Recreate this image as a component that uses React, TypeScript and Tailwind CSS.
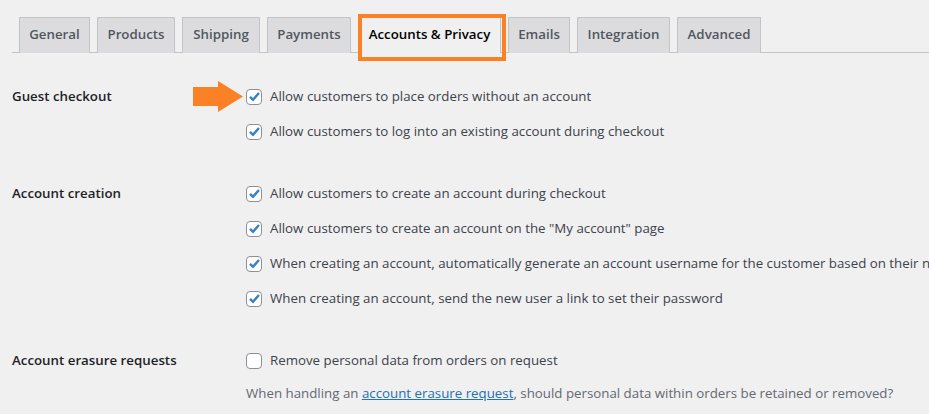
import React from "react";

const tabs = [
  { name: "General", w: "w-[71px]" },
  { name: "Products", w: "w-[78px]" },
  { name: "Shipping", w: "w-[78px]" },
  { name: "Payments", w: "w-[84px]" },
  { name: "Accounts & Privacy", w: "w-[143px]", active: true },
  { name: "Emails", w: "w-[62px]" },
  { name: "Integration", w: "w-[93px]" },
  { name: "Advanced", w: "w-[84px]" },
];

const Checkbox = ({ checked }: { checked: boolean }) => (
  <span className="w-4 h-4 shrink-0 rounded-[4px] border border-[#8c8f94] bg-white flex items-center justify-center">
    {checked && (
      <svg width="13" height="13" viewBox="0 0 13 13">
        <path d="M2 6.8 L5 9.8 L11 3" fill="none" stroke="#3582c4" strokeWidth="2.4" />
      </svg>
    )}
  </span>
);

const Option = ({ label, checked = true }: { label: string; checked?: boolean }) => (
  <div className="h-[35px] flex items-center gap-2 whitespace-nowrap">
    <Checkbox checked={checked} />
    <span className="text-[#3c434a]">{label}</span>
  </div>
);

const Section = ({ title, children }: { title: string; children: React.ReactNode }) => (
  <div className="flex">
    <div className="w-[234px] shrink-0 h-[35px] flex items-center font-semibold text-[#1d2327]">{title}</div>
    <div className="flex flex-col">{children}</div>
  </div>
);

export default function App() {
  return (
    <div
      className="w-[929px] h-[414px] overflow-hidden bg-[#f0f0f1] pl-3 text-[13.3px] relative"
      style={{ fontFamily: '"Segoe UI", "Open Sans", sans-serif' }}
    >
      {/* Tabs */}
      <div className="flex items-end pt-[17px] pl-[7px] border-b border-[#c3c4c7] h-[53px]">
        {tabs.map((t, i) => (
          <div
            key={t.name}
            className={`relative ${t.w} h-[36px] -mb-px pb-px flex items-center justify-center font-semibold border border-b-0 ${
              i > 0 ? "ml-[7px]" : ""
            } ${
              t.active
                ? "bg-[#f0f0f1] text-black border-[#c3c4c7]"
                : "bg-[#dcdcde] text-[#50575e] border-[#c3c4c7]"
            }`}
          >
            {t.name}
            {t.active && (
              <span className="absolute -left-px -top-[4px] -right-[6px] -bottom-[8px] border-4 border-[#fb8127]" />
            )}
          </div>
        ))}
      </div>

      {/* Settings */}
      <div className="flex flex-col gap-[27px] pt-[26px]">
        <div className="relative">
          <Section title="Guest checkout">
            <Option label="Allow customers to place orders without an account" />
            <Option label="Allow customers to log into an existing account during checkout" />
          </Section>
          {/* orange arrow */}
          <svg className="absolute left-[181px] top-[2px]" width="51" height="31" viewBox="0 0 51 31">
            <path d="M0 6 H25 V0 L50 15.5 L25 31 V25 H0 Z" fill="#fb8127" />
          </svg>
        </div>

        <Section title="Account creation">
          <Option label="Allow customers to create an account during checkout" />
          <Option label='Allow customers to create an account on the "My account" page' />
          <Option label="When creating an account, automatically generate an account username for the customer based on their name, surname or email" />
          <Option label="When creating an account, send the new user a link to set their password" />
        </Section>

        <Section title="Account erasure requests">
          <Option label="Remove personal data from orders on request" checked={false} />
          <p className="text-[#646970] whitespace-nowrap mt-[6px]">
            When handling an{" "}
            <a className="text-[#2271b1] underline">account erasure request</a>, should personal data within orders be
            retained or removed?
          </p>
        </Section>
      </div>
    </div>
  );
}
